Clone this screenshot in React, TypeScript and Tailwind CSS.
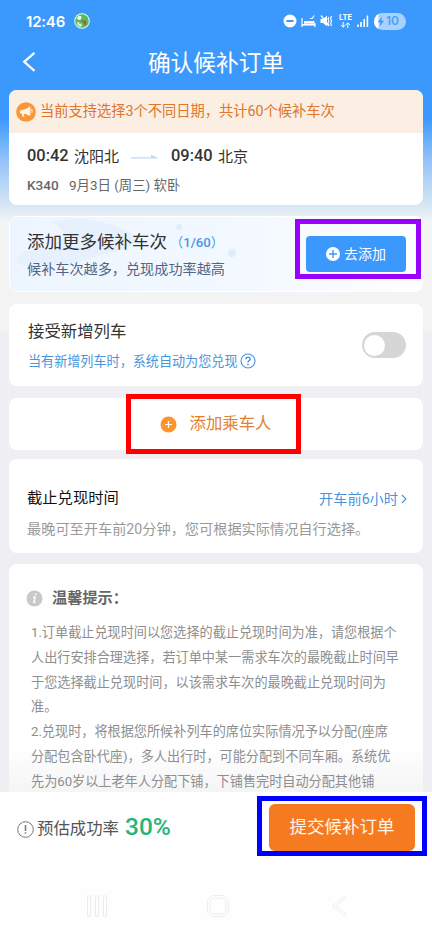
import { useState } from 'react';
import type { ReactNode } from 'react';

const tips = [
  '1.订单截止兑现时间以您选择的截止兑现时间为准，请您根据个',
  '人出行安排合理选择，若订单中某一需求车次的最晚截止时间早',
  '于您选择截止兑现时间，以该需求车次的最晚截止兑现时间为',
  '准。',
  '2.兑现时，将根据您所候补列车的席位实际情况予以分配(座席',
  '分配包含卧代座)，多人出行时，可能分配到不同车厢。系统优',
  '先为60岁以上老年人分配下铺，下铺售完时自动分配其他铺',
];

const StatusBar = () => (
  <div className="flex h-[42px] items-center pl-[26px] pr-[26px] text-white">
    <span className="w-12 font-['Inter'] text-[15px] leading-none font-semibold tracking-[-0.2px]">12:46</span>
    <svg width="16" height="16" viewBox="0 0 16 16">
      <circle cx="8" cy="8" r="7.8" fill="#e9f8e8" />
      <circle cx="8" cy="8" r="6.8" fill="#55b95f" />
      <path d="M3 4.5Q5 1.8 7.4 3.2Q8 6 5.6 7Q3 7 3 4.5Z" fill="#f3fbe9" />
      <path d="M3 9.5l2-.5.6 2 2-.4.3 2.6-2 .5L3.6 12Z" fill="#d9f5d2" />
      <path d="M6.5 7.2l5.6.6.2 4-1.6.4-1.2-2.6Z" fill="#b4543b" />
    </svg>
    <div className="flex-1" />
    <svg className="mr-1" width="14" height="14" viewBox="0 0 14 14">
      <circle cx="7" cy="7" r="6.5" fill="#fff" />
      <path d="M3.5 7h7" stroke="#3b98fc" strokeWidth="2" />
    </svg>
    <svg className="mr-1" width="15" height="14" viewBox="0 0 15 14" fill="none" stroke="#fff">
      <path d="M1 4v9M14 9v4" strokeWidth="1.2" />
      <path d="M1 10.8h13" strokeWidth="1.6" />
      <path d="M3 8.4h10.5" strokeWidth="2.6" />
      <path d="M9 4.5h2.2L13.2 1.5" strokeWidth="1.2" />
    </svg>
    <svg className="mr-1.5" width="13" height="14" viewBox="0 0 13 14" fill="none" stroke="#fff">
      <path d="M.5 5h2.5L7 1.8v10.4L3 9H.5Z" fill="#fff" stroke="none" />
      <path d="M1 1.5l8 10.5" strokeWidth="1.3" />
      <path d="M9 3l-1 2 1 2-1 2 1 2M11.6 2l-1 2.5 1 2.5-1 2.5 1 2.5" strokeWidth="1.1" />
    </svg>
    <div className="mr-[5px] flex w-[13px] flex-col items-center">
      <span className="font-['Inter'] text-[7.5px] leading-[8px] font-bold">LTE</span>
      <svg width="11" height="6" viewBox="0 0 11 6" fill="none" stroke="#fff">
        <path d="M3.2 0v5M1 3l2.2 2.2L5.4 3M7.8 6V1M5.6 3l2.2-2.2L10 3" />
      </svg>
    </div>
    <svg className="mr-[5px]" width="12" height="12" viewBox="0 0 12 12" stroke="#fff" strokeWidth="1.6">
      <path d="M1 9.5V12M4 7v5M7.2 4v8" />
      <path d="M10.4 0.5V12" />
    </svg>
    <div className="flex h-[17px] w-8 items-center overflow-hidden rounded-full bg-[#a9d1fe]">
      <svg width="12" height="17" viewBox="0 0 12 17">
        <path d="M0 0h4.5v17H0Z" fill="#fff" />
        <path d="M8 3.5L3.8 9.2h2.6L5.8 13.5 10 7.8H7.3Z" fill="#3b98fc" />
      </svg>
      <span className="font-['Inter'] text-[12px] leading-none font-semibold text-[#4a9ff8]">10</span>
    </div>
  </div>
);

const Header = () => (
  <header className="relative flex h-12 items-center justify-center text-white">
    <svg className="absolute left-[21px] top-[9px]" width="16" height="22" viewBox="0 0 16 22" fill="none" stroke="#fff" strokeWidth="2.2">
      <path d="M13.5 1.8L3.2 10.8l10.3 9" />
    </svg>
    <h1 className="pb-[3px] text-[22.7px] leading-none font-normal">确认候补订单</h1>
  </header>
);

const Card = ({ className, children }: { className: string; children: ReactNode }) => (
  <section className={`w-full shrink-0 overflow-hidden rounded-lg bg-white ${className}`}>{children}</section>
);

const TrainCard = () => (
  <Card className="h-[115px]">
    <div className="flex h-[43px] items-center bg-[#fbeee3] pl-[7px] text-[#e0752b]">
      <svg className="mr-[4px]" width="20" height="20" viewBox="0 0 20 20">
        <circle cx="10" cy="10" r="9.8" fill="#f99636" />
        <path d="M3.8 8.6L8.6 7.6 14.4 4.3V14L9.2 11.9H7.6L8.5 15 6.5 14.6 5.6 11.5 4 11.2Z" fill="#fff3e4" />
        <path d="M15.5 7.2q1.3 1.6.2 3.6" stroke="#fff3e4" strokeWidth="1.1" fill="none" />
      </svg>
      <span className="text-[14.25px] leading-none">当前支持选择3个不同日期，共计60个候补车次</span>
    </div>
    <div className="flex h-[47px] items-center pl-[18px] text-[#333]">
      <span className="w-[47px] text-[16.4px] leading-none font-medium">00:42</span>
      <span className="w-[57px] pt-px text-[15px] leading-none">沈阳北</span>
      <svg className="mr-3" width="28" height="6" viewBox="0 0 28 6">
        <path d="M0 3.2h20V.8L28 4.6H0Z" fill="#bdd9f8" />
      </svg>
      <span className="w-[47px] text-[16.4px] leading-none font-medium">09:40</span>
      <span className="pt-px text-[15px] leading-none">北京</span>
    </div>
    <div className="flex h-3 items-center pl-[18px] text-[#666]">
      <span className="w-[42px] text-[13.6px] leading-none font-medium">K340</span>
      <span className="text-[13.4px] leading-none">9月3日 (周三) 软卧</span>
    </div>
  </Card>
);

const MoreTrains = () => (
  <div className="relative h-[76px] shrink-0 overflow-hidden rounded-lg border border-white bg-linear-to-r from-[#edf5fe] via-[#f2f8ff] to-[#fdfeff]">
    <svg className="absolute inset-0" width="412" height="74" viewBox="0 0 412 74">
      <path d="M42 5Q75-3 110 11Q150 25 92 38Q55 52 14 49Q-1 43 15 34Q75 26 42 5Z" fill="#e6f1fd" />
      <circle cx="169" cy="10" r="3" fill="#dfedfc" />
      <circle cx="222" cy="36" r="4" fill="#deecfc" />
    </svg>
    <div className="relative flex h-full items-center justify-between pl-[17px] pr-4">
      <div className="flex flex-col gap-2.5 pt-0.5">
        <div className="flex items-center">
          <span className="text-[17.5px] leading-none text-[#333]">添加更多候补车次</span>
          <span className="ml-[3px] text-[13.2px] leading-none text-[#4796ea]">
            （<span className="font-medium">1/60</span>）
          </span>
        </div>
        <p className="text-[14.15px] leading-none text-[#516585]">候补车次越多，兑现成功率越高</p>
      </div>
      <button className="flex h-9 w-[100px] items-center justify-center gap-1 rounded bg-[#3b98fc] text-[14px] text-white">
        <svg width="14" height="14" viewBox="0 0 14 14">
          <circle cx="7" cy="7" r="7" fill="#fff" />
          <path d="M3 7h8M7 3v8" stroke="#3b98fc" strokeWidth="1.4" />
        </svg>
        <span className="leading-none">去添加</span>
      </button>
    </div>
  </div>
);

const NewTrainSwitch = () => {
  const [on, setOn] = useState(false);

  return (
    <Card className="flex h-[82px] items-center justify-between pl-[19px] pr-[17px]">
      <div className="flex flex-col gap-[13px] pt-[3px]">
        <span className="text-[16.4px] leading-none text-[#333]">接受新增列车</span>
        <span className="flex h-[15px] items-center text-[13.1px] leading-none text-[#4796dc]">
          当有新增列车时，系统自动为您兑现
          <svg className="ml-0.5" width="16" height="16" viewBox="0 0 16 16" fill="none" stroke="#4796dc">
            <circle cx="8" cy="8" r="7" strokeWidth="1.1" />
            <path d="M5.8 6.3q.1-2.2 2.2-2.2t2.2 1.9q0 1-1.1 1.7T8 9.5" strokeWidth="1.4" />
            <path d="M8 10.8v1.5" strokeWidth="1.5" />
          </svg>
        </span>
      </div>
      <button
        onClick={() => setOn(!on)}
        className={`flex h-[26px] w-11 items-center rounded-full px-0.5 ${on ? 'justify-end bg-[#3b98fc]' : 'bg-[#d6d6d6]'}`}
      >
        <span className="h-[21px] w-[21px] rounded-full bg-white" />
      </button>
    </Card>
  );
};

const AddPassenger = () => (
  <Card className="flex h-[52px] items-center justify-center gap-[13px] pr-px text-[#e28231]">
    <svg width="17" height="17" viewBox="0 0 17 17">
      <circle cx="8.5" cy="8.5" r="8" fill="#fb962f" />
      <path d="M5 8.5h7M8.5 5v7" stroke="#fff" strokeWidth="1.2" />
    </svg>
    <span className="text-[16.4px] leading-none">添加乘车人</span>
  </Card>
);

const Deadline = () => (
  <Card className="h-[94px] pl-[18px] pr-4 pt-[31px]">
    <div className="flex h-[18px] items-center justify-between">
      <span className="text-[15.3px] leading-none text-[#111]">截止兑现时间</span>
      <span className="flex items-center gap-[3px] text-[14.2px] leading-none text-[#4796dc]">
        开车前6小时
        <svg width="6" height="10" viewBox="0 0 6 10" fill="none" stroke="#4796dc" strokeWidth="1.1">
          <path d="M1 1l4 4-4 4" />
        </svg>
      </span>
    </div>
    <p className="mt-[14px] text-[14.2px] leading-none whitespace-nowrap text-[#999]">
      最晚可至开车前20分钟，您可根据实际情况自行选择。
    </p>
  </Card>
);

const Tips = () => (
  <section className="h-[228px] shrink-0 overflow-hidden rounded-t-lg bg-linear-to-b from-white from-80% to-[#f5f5f5] pt-[25px]">
    <div className="flex h-[18px] items-center pl-[17px]">
      <svg className="mr-[9px]" width="17" height="17" viewBox="0 0 17 17">
        <circle cx="8.5" cy="8.5" r="8" fill="#c9c9c9" />
        <path d="M9.6 3.5v1.8M7 7.3h1.9L8 12.3h1.5" stroke="#fff" strokeWidth="1.6" fill="none" />
      </svg>
      <span className="pt-0.5 text-[15.2px] leading-none font-bold text-[#666]">温馨提示：</span>
    </div>
    <div className="mt-3.5 pl-[22px] text-[13.15px] leading-[24.8px] whitespace-nowrap text-[#8e8e8e]">
      {tips.map((line) => (
        <p key={line}>{line}</p>
      ))}
    </div>
  </section>
);

const BottomBar = () => (
  <footer className="h-36 bg-[#fefefe]">
    <div className="flex h-[70px] items-center justify-between pl-[17px] pr-[17px]">
      <div className="flex items-center pt-1">
        <svg className="mr-[3px]" width="17" height="17" viewBox="0 0 17 17" fill="none" stroke="#777">
          <circle cx="8.5" cy="8.5" r="7.8" strokeWidth="1" />
          <path d="M8.5 4v6M8.5 11.2v1.6" strokeWidth="1.5" />
        </svg>
        <span className="text-[16.4px] leading-none text-[#555]">预估成功率</span>
        <span className="ml-1.5 pb-1 text-[24.5px] leading-none font-medium text-[#2bb377]">30%</span>
      </div>
      <button className="h-[47px] w-[146px] rounded-md bg-[#f67b20] pt-0.5 text-[17.5px] leading-none text-[#fff5e8]">
        提交候补订单
      </button>
    </div>
    <div className="flex h-[88px] items-start justify-between pl-[86px] pr-[84px] pt-[33px]">
      <svg width="22" height="22" viewBox="0 0 22 22" fill="#fff" stroke="#ececec">
        <rect x="1.5" y="1" width="3" height="20" />
        <rect x="9.5" y="1" width="3" height="20" />
        <rect x="17.5" y="1" width="3" height="20" />
      </svg>
      <svg className="-ml-1" width="24" height="22" viewBox="0 0 24 22" fill="none" stroke="#ececec">
        <rect x="1.5" y=".5" width="21" height="21" rx="7" />
        <rect x="4" y="3" width="16" height="16" rx="5" />
      </svg>
      <svg width="17" height="22" viewBox="0 0 17 22" fill="none" stroke="#ececec">
        <path d="M13.5 1L1.5 11l12 10 1.6-1.8L5.2 11l9.9-8.2Z" />
      </svg>
    </div>
  </footer>
);

export default function App() {
  return (
    <div className="relative h-[936px] w-[432px] overflow-hidden bg-[#eeeef3] font-['Roboto','Noto_Sans_CJK_SC',sans-serif]">
      <div className="bg-[linear-gradient(to_bottom,#3b98fc_0,#3b98fc_118px,#8fc1f8_158px,#cfe2f6_200px,#f3f4f4_222px,#f3f3f3_331px,#eeeef3_332px)]">
        <StatusBar />
        <Header />
        <main className="flex h-[702px] flex-col px-[9px]">
          <TrainCard />
          <div className="h-[11px] shrink-0" />
          <MoreTrains />
          <div className="h-3 shrink-0" />
          <NewTrainSwitch />
          <div className="h-3 shrink-0" />
          <AddPassenger />
          <div className="h-[9px] shrink-0" />
          <Deadline />
          <div className="h-[11px] shrink-0" />
          <Tips />
        </main>
      </div>
      <BottomBar />

      {/* Highlight frames */}
      <div className="absolute left-[295px] top-[219px] h-[60px] w-[126px] border-[5px] border-[#9a00ff]" />
      <div className="absolute left-[126px] top-[394px] h-[60px] w-[175px] border-[5px] border-[#ff0000]" />
      <div className="absolute left-[257px] top-[796px] h-[60px] w-[170px] border-[5px] border-[#0000ff]" />
    </div>
  );
}
